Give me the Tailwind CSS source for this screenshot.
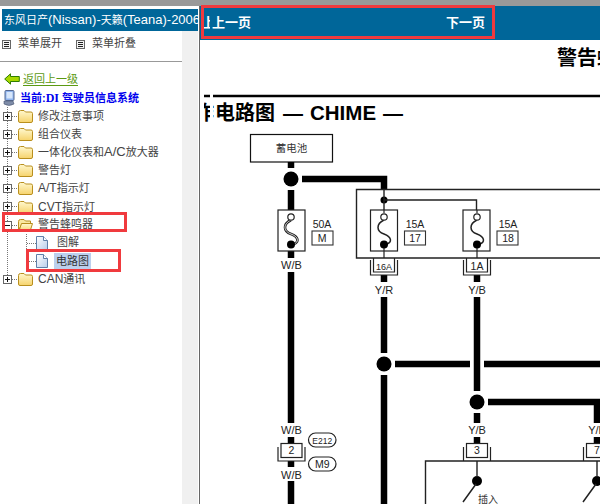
<!DOCTYPE html>
<html lang="zh-CN">
<head>
    <meta charset="UTF-8">
    <title>东风日产(Nissan)-天籁(Teana)-2006</title>
    <script src="https://cdn.jsdelivr.net/npm/@tailwindcss/browser@4"></script>
</head>
<body class="bg-white overflow-hidden font-['Liberation_Sans','Noto_Sans_CJK_SC',sans-serif]">

    <!-- icon symbols -->
    <svg class="absolute w-0 h-0">
        <defs>
            <linearGradient id="fold" x1="0" y1="0" x2="0" y2="1">
                <stop offset="0" stop-color="#fff8cf"/>
                <stop offset="1" stop-color="#f6d36c"/>
            </linearGradient>
            <linearGradient id="page" x1="0" y1="0" x2="1" y2="1">
                <stop offset="0" stop-color="#ffffff"/>
                <stop offset="1" stop-color="#b9cdea"/>
            </linearGradient>
        </defs>
        <symbol id="folder" viewBox="0 0 15 14">
            <path d="M.5 3.5 Q.5 1.5 2.5 1.5 H6 L7.5 3 H13 Q14.5 3 14.5 4.5 V12 Q14.5 13.5 13 13.5 H2 Q.5 13.5 .5 12 Z" fill="url(#fold)" stroke="#b98f1e"/>
        </symbol>
        <symbol id="folder-open" viewBox="0 0 15 14">
            <path d="M.5 3.5 Q.5 1.5 2.5 1.5 H6 L7.5 3 H12.5 V5.5 H4 L.5 12.5 Z" fill="#f9e7a0" stroke="#b98f1e"/>
            <path d="M3.5 5.5 H14.5 L12 13.5 H.8 Z" fill="url(#fold)" stroke="#b98f1e"/>
        </symbol>
        <symbol id="doc" viewBox="0 0 12 14">
            <path d="M.5 .5 H7.5 L11.5 4.5 V13.5 H.5 Z" fill="url(#page)" stroke="#5f7fa8"/>
            <path d="M7.5 .5 V4.5 H11.5" fill="#fff" stroke="#5f7fa8"/>
        </symbol>
        <symbol id="menu-box" viewBox="0 0 9 9">
            <rect x=".5" y=".5" width="8" height="8" fill="#f4f4f4" stroke="#666"/>
            <path d="M2 2.5 H7 M2 4.5 H7 M2 6.5 H7" stroke="#222"/>
        </symbol>
    </svg>

    <div class="relative w-[600px] h-[504px] overflow-hidden">
        <div class="h-[6px] bg-[#999999]"></div>

        <div class="flex h-[498px]">
            <!-- left menu -->
            <aside class="w-[198px] shrink-0 flex flex-col pt-[3px]">
                <div class="ml-[2px] h-[22px] bg-[#006699] text-white text-[11px] leading-[22px] pl-[2px] whitespace-nowrap overflow-hidden">东风日产<span class="text-[13px]">(Nissan)-</span>天籁<span class="text-[13px]">(Teana)-2006</span></div>

                <div class="flex flex-1 min-h-0">
                    <div class="w-[182px] shrink-0 text-[11px] text-[#444]">
                        <div class="flex items-center h-[25px] box-content pb-[5px] border-b border-[#999999]">
                            <svg class="w-[9px] h-[9px] ml-[2px] mt-[1px]"><use href="#menu-box"/></svg>
                            <span class="ml-[7px]">菜单展开</span>
                            <svg class="w-[9px] h-[9px] ml-[14px] mt-[1px]"><use href="#menu-box"/></svg>
                            <span class="ml-[7px]">菜单折叠</span>
                        </div>

                        <div class="flex items-center h-[20px] mt-[7px]">
                            <svg class="w-[16px] h-[12px] ml-[4px]" viewBox="0 0 16 12">
                                <path d="M.7 6 L6.5 .8 V3.5 H15.3 V8.5 H6.5 V11.2 Z" fill="#a8d800" stroke="#2e7d00"/>
                            </svg>
                            <span class="ml-[3px] text-[#5c9a12] underline underline-offset-2">返回上一级</span>
                        </div>

                        <div class="flex items-center h-[18px]">
                            <svg class="w-[12px] h-[17px] ml-[3px]" viewBox="0 0 12 17">
                                <rect x="2" y=".5" width="9" height="10" rx="1" fill="#8fb4ee" stroke="#55688f"/>
                                <rect x="3.5" y="2" width="6" height="6.5" fill="#d6e6fb"/>
                                <path d="M1 11 H10 L11 14 Q6 17 1 14 Z" fill="#7e8ca8" stroke="#4a5670" stroke-width=".6"/>
                            </svg>
                            <span class="ml-[5px] font-bold text-[#0000ee] whitespace-nowrap">当前:<span class="font-['Liberation_Serif'] text-[12px]">DI</span> 驾驶员信息系统</span>
                        </div>

                        <!-- tree -->
                        <div class="whitespace-nowrap">
                            <div class="flex items-center h-[18.1px]">
                                <svg class="w-[18px] h-[18.1px] shrink-0"><path d="M7.5 0 V18.1 M12 9.5 H18" stroke="#777" stroke-dasharray="1 1"/><rect x="3.5" y="5.5" width="8" height="8" fill="#fff" stroke="#666"/><path d="M5 9.5 H10 M7.5 7 V12" stroke="#111"/></svg>
                                <svg class="w-[15px] h-[14px] shrink-0"><use href="#folder"/></svg>
                                <span class="ml-[5px]">修改注意事项</span>
                            </div>
                            <div class="flex items-center h-[18.1px]">
                                <svg class="w-[18px] h-[18.1px] shrink-0"><path d="M7.5 0 V18.1 M12 9.5 H18" stroke="#777" stroke-dasharray="1 1"/><rect x="3.5" y="5.5" width="8" height="8" fill="#fff" stroke="#666"/><path d="M5 9.5 H10 M7.5 7 V12" stroke="#111"/></svg>
                                <svg class="w-[15px] h-[14px] shrink-0"><use href="#folder"/></svg>
                                <span class="ml-[5px]">组合仪表</span>
                            </div>
                            <div class="flex items-center h-[18.1px]">
                                <svg class="w-[18px] h-[18.1px] shrink-0"><path d="M7.5 0 V18.1 M12 9.5 H18" stroke="#777" stroke-dasharray="1 1"/><rect x="3.5" y="5.5" width="8" height="8" fill="#fff" stroke="#666"/><path d="M5 9.5 H10 M7.5 7 V12" stroke="#111"/></svg>
                                <svg class="w-[15px] h-[14px] shrink-0"><use href="#folder"/></svg>
                                <span class="ml-[5px]">一体化仪表和<span class="text-[13px]">A/C</span>放大器</span>
                            </div>
                            <div class="flex items-center h-[18.1px]">
                                <svg class="w-[18px] h-[18.1px] shrink-0"><path d="M7.5 0 V18.1 M12 9.5 H18" stroke="#777" stroke-dasharray="1 1"/><rect x="3.5" y="5.5" width="8" height="8" fill="#fff" stroke="#666"/><path d="M5 9.5 H10 M7.5 7 V12" stroke="#111"/></svg>
                                <svg class="w-[15px] h-[14px] shrink-0"><use href="#folder"/></svg>
                                <span class="ml-[5px]">警告灯</span>
                            </div>
                            <div class="flex items-center h-[18.1px]">
                                <svg class="w-[18px] h-[18.1px] shrink-0"><path d="M7.5 0 V18.1 M12 9.5 H18" stroke="#777" stroke-dasharray="1 1"/><rect x="3.5" y="5.5" width="8" height="8" fill="#fff" stroke="#666"/><path d="M5 9.5 H10 M7.5 7 V12" stroke="#111"/></svg>
                                <svg class="w-[15px] h-[14px] shrink-0"><use href="#folder"/></svg>
                                <span class="ml-[5px]"><span class="text-[12px]">A/T</span>指示灯</span>
                            </div>
                            <div class="flex items-center h-[18.1px]">
                                <svg class="w-[18px] h-[18.1px] shrink-0"><path d="M7.5 0 V18.1 M12 9.5 H18" stroke="#777" stroke-dasharray="1 1"/><rect x="3.5" y="5.5" width="8" height="8" fill="#fff" stroke="#666"/><path d="M5 9.5 H10 M7.5 7 V12" stroke="#111"/></svg>
                                <svg class="w-[15px] h-[14px] shrink-0"><use href="#folder"/></svg>
                                <span class="ml-[5px]"><span class="text-[12px]">CVT</span>指示灯</span>
                            </div>
                            <div class="flex items-center h-[18.1px]">
                                <svg class="w-[18px] h-[18.1px] shrink-0"><path d="M7.5 0 V18.1 M12 9.5 H18" stroke="#777" stroke-dasharray="1 1"/><rect x="3.5" y="5.5" width="8" height="8" fill="#fff" stroke="#666"/><path d="M5 9.5 H10" stroke="#111"/></svg>
                                <svg class="w-[15px] h-[14px] shrink-0"><use href="#folder-open"/></svg>
                                <span class="ml-[5px]">警告蜂鸣器</span>
                            </div>
                            <div class="flex items-center h-[18.1px]">
                                <svg class="w-[36px] h-[18.1px] shrink-0"><path d="M7.5 0 V18.1 M26.5 0 V18.1 M27 9.5 H36" stroke="#777" stroke-dasharray="1 1"/></svg>
                                <svg class="w-[12px] h-[14px] shrink-0"><use href="#doc"/></svg>
                                <span class="ml-[9px]">图解</span>
                            </div>
                            <div class="flex items-center h-[18.1px]">
                                <svg class="w-[36px] h-[18.1px] shrink-0"><path d="M7.5 0 V18.1 M26.5 0 V9.5 M27 9.5 H36" stroke="#777" stroke-dasharray="1 1"/></svg>
                                <svg class="w-[12px] h-[14px] shrink-0"><use href="#doc"/></svg>
                                <span class="ml-[6px] px-[2px] bg-[#bcd0ee] text-[#333]">电路图</span>
                            </div>
                            <div class="flex items-center h-[18.1px]">
                                <svg class="w-[18px] h-[18.1px] shrink-0"><path d="M7.5 0 V9 M12 9.5 H18" stroke="#777" stroke-dasharray="1 1"/><rect x="3.5" y="5.5" width="8" height="8" fill="#fff" stroke="#666"/><path d="M5 9.5 H10 M7.5 7 V12" stroke="#111"/></svg>
                                <svg class="w-[15px] h-[14px] shrink-0"><use href="#folder"/></svg>
                                <span class="ml-[5px]"><span class="text-[12px]">CAN</span>通讯</span>
                            </div>
                        </div>
                    </div>
                    <div class="flex-1 bg-[#f0f0f0]"></div>
                </div>
            </aside>

            <!-- divider -->
            <div class="w-[1px] bg-white"></div>
            <div class="w-[1px] bg-[#666666]"></div>

            <!-- right page -->
            <main class="flex-1 min-w-0 flex flex-col">
                <div class="h-[34px] shrink-0 bg-[#006699] text-white text-[13px] font-bold flex items-center whitespace-nowrap">
                    <span class="ml-[2px] w-[8px] overflow-hidden">上</span>
                    <span class="ml-[2px]">上一页</span>
                    <span class="ml-[195px]">下一页</span>
                </div>

                <!-- wiring diagram -->
                <svg class="block w-[400px] h-[464px] text-black" viewBox="200 40 400 464" fill="none">
                    <!-- headings -->
                    <text x="557" y="65" font-size="20" font-weight="700" fill="#000">警告蜂鸣器</text>
                    <path d="M204 96 H600" stroke="#000" stroke-width="2.4"/>
                    <text x="194" y="120" font-size="20" font-weight="700" fill="#000">作</text>
                    <rect x="200" y="85" width="4" height="40" fill="#fff"/>
                    <rect x="210" y="90" width="3" height="36" fill="#fff"/>
                    <text x="215" y="120" font-size="20" font-weight="700" fill="#000">电路图</text>
                    <text x="283" y="120" font-size="20" font-weight="700" fill="#000">—</text>
                    <text x="310" y="120" font-size="20.5" font-weight="700" fill="#000">CHIME</text>
                    <text x="383" y="120" font-size="20" font-weight="700" fill="#000">—</text>

                    <!-- battery -->
                    <rect x="250.5" y="134.5" width="82" height="27.5" stroke="#111" stroke-width="1.2"/>
                    <text x="291.5" y="152" font-size="10.5" text-anchor="middle" fill="#333">蓄电池</text>

                    <!-- thick wires -->
                    <g stroke="#000" stroke-width="6.5">
                        <path d="M291 162 V168"/>
                        <path d="M291 190 V210"/>
                        <path d="M291 251 V258"/>
                        <path d="M291 272 V423"/>
                        <path d="M291 437 V443"/>
                        <path d="M291 461 V467"/>
                        <path d="M291 481 V504"/>
                        <path d="M302 179 H384 V190"/>
                        <path d="M384 275 V282"/>
                        <path d="M384 297 V353"/>
                        <path d="M384 375 V504"/>
                        <path d="M477 275 V282"/>
                        <path d="M477 297 V391"/>
                        <path d="M477 413 V423"/>
                        <path d="M477 437 V443"/>
                        <path d="M395 364 H470"/>
                        <path d="M484 364 H600"/>
                        <path d="M488 402 H597 V423"/>
                        <path d="M597 437 V443"/>
                    </g>
                    <g fill="#000">
                        <circle cx="291" cy="179" r="7.5"/>
                        <circle cx="384" cy="364" r="7.5"/>
                        <circle cx="477" cy="402" r="7.5"/>
                        <circle cx="384" cy="200" r="3.5"/>
                        <circle cx="477" cy="481" r="5"/>
                        <circle cx="597" cy="481" r="5"/>
                    </g>

                    <!-- fuse block -->
                    <path d="M600 189.5 H356.5 V258 H600" stroke="#222" stroke-width="1.4"/>
                    <path d="M384 190 V210 M384 200 H476.5 V210" stroke="#222" stroke-width="1.4"/>

                    <!-- fuses -->
                    <g stroke="#222" stroke-width="1.2">
                        <rect x="278" y="210" width="27" height="41" fill="#fff"/>
                        <rect x="370.5" y="210" width="27" height="41" fill="#fff"/>
                        <rect x="463" y="210" width="27" height="41" fill="#fff"/>
                        <path d="M291 220 C283 224 283 231 291 234 C299 237 299 242 294 244" stroke-width="2.6"/>
                        <path d="M291 220 C283 224 283 231 291 234 C299 237 299 242 294 244" stroke="#fff" stroke-width=".8"/>
                        <path d="M384 220 C376 224 376 231 384 234 C392 237 392 242 387 244" stroke-width="1.5"/>
                        <path d="M477 220 C469 224 469 231 477 234 C485 237 485 242 480 244" stroke-width="1.5"/>
                        <path d="M384 210 V213 M384 248 V258 M477 210 V213 M477 248 V258"/>
                        <circle cx="291" cy="217" r="3.2" fill="#fff"/>
                        <circle cx="384" cy="217" r="3.2" fill="#fff"/>
                        <circle cx="477" cy="217" r="3.2" fill="#fff"/>
                    </g>
                    <circle cx="291" cy="244.5" r="4" fill="#000"/>
                    <circle cx="384" cy="244.5" r="4" fill="#000"/>
                    <circle cx="477" cy="244.5" r="4" fill="#000"/>

                    <!-- fuse labels -->
                    <g font-size="10.5" fill="#222" text-anchor="middle">
                        <text x="322" y="228">50A</text>
                        <text x="415" y="228">15A</text>
                        <text x="508" y="228">15A</text>
                        <text x="322" y="242">M</text>
                        <text x="415" y="242">17</text>
                        <text x="508" y="242">18</text>
                    </g>
                    <g stroke="#333" stroke-width="1.1">
                        <rect x="312" y="231" width="21" height="14"/>
                        <rect x="404.5" y="231" width="21" height="14"/>
                        <rect x="497" y="231" width="21" height="14"/>
                    </g>

                    <!-- connectors under the fuse block -->
                    <g stroke="#222" stroke-width="1.2">
                        <path d="M373.5 258 V272 H394.5 V258"/>
                        <path d="M370.5 260 V275 H397.5 V260"/>
                        <path d="M466.5 258 V272 H487.5 V258"/>
                        <path d="M463.5 260 V275 H490.5 V260"/>
                        <rect x="281" y="443.5" width="21" height="14" fill="#fff"/>
                        <path d="M278 447 V461 H305 V447"/>
                        <rect x="466.5" y="443.5" width="21" height="14" fill="#fff"/>
                        <path d="M463.5 447 V461 M490.5 447 V461"/>
                        <rect x="586.5" y="443.5" width="21" height="14" fill="#fff"/>
                        <path d="M583.5 447 V461"/>
                        <rect x="308.5" y="433" width="27.5" height="14" rx="7"/>
                        <rect x="308.5" y="457" width="27.5" height="14" rx="7"/>
                    </g>
                    <g font-size="10.5" fill="#222" text-anchor="middle">
                        <text x="384" y="270" font-size="9">16A</text>
                        <text x="477" y="270">1A</text>
                        <text x="291.5" y="454">2</text>
                        <text x="477" y="454">3</text>
                        <text x="597" y="454">7</text>
                        <text x="322.3" y="443.5" font-size="8.5">E212</text>
                        <text x="322.3" y="468">M9</text>
                        <text x="291.5" y="269" font-size="11">W/B</text>
                        <text x="384" y="294" font-size="11">Y/R</text>
                        <text x="477" y="294" font-size="11">Y/B</text>
                        <text x="291.5" y="434" font-size="11">W/B</text>
                        <text x="291.5" y="479" font-size="11">W/B</text>
                        <text x="477" y="434" font-size="11">Y/B</text>
                        <text x="597" y="434" font-size="11">Y/B</text>
                    </g>

                    <!-- lower module -->
                    <path d="M425.5 504 V461 H600" stroke="#222" stroke-width="1.4"/>
                    <path d="M477 461 V477 M597 461 V477" stroke="#222" stroke-width="1.4"/>
                    <path d="M476 484 L463 502 M596 484 L583 502" stroke="#222" stroke-width="1.5"/>
                    <text x="478" y="503" font-size="10" fill="#333">插入</text>
                </svg>
            </main>
        </div>

        <!-- red highlight marks -->
        <div class="absolute left-[201px] top-[5px] w-[294px] h-[34px] border-[3px] border-[#f03a3e]"></div>
        <div class="absolute left-[2px] top-[212px] w-[125px] h-[20px] border-[3px] border-[#f03a3e]"></div>
        <div class="absolute left-[26px] top-[249px] w-[95px] h-[23px] border-[3px] border-[#f03a3e]"></div>
    </div>
</body>
</html>
